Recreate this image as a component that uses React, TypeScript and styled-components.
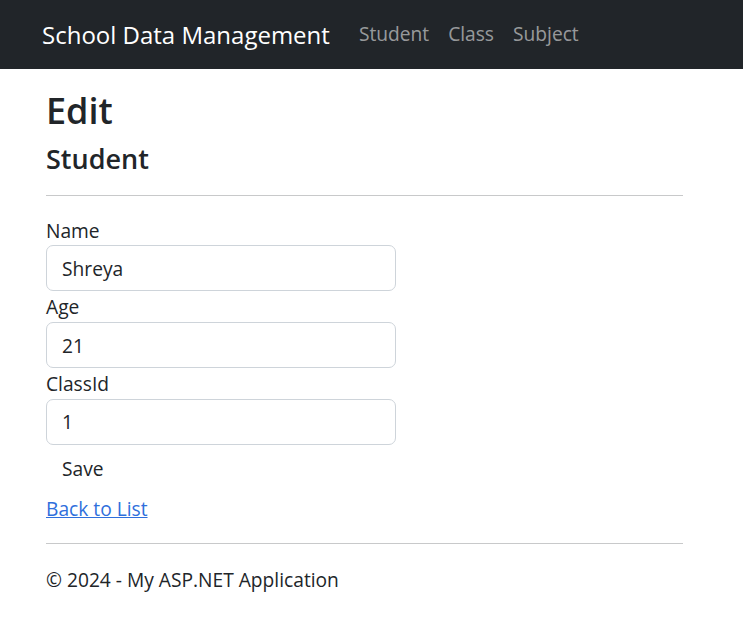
import React from "react";
import styled, { createGlobalStyle } from "styled-components";

const Global = createGlobalStyle`
  html { font-size: 19.2px; }
  body {
    margin: 0;
    font-family: "Open Sans", "Noto Sans", sans-serif;
    color: #212529;
    background: #fff;
    line-height: 1.5;
  }
  * { box-sizing: border-box; }
`;

const Navbar = styled.nav`
  height: 69px;
  background: #212529;
  display: flex;
  align-items: center;
  padding-left: 42px;
`;

const Brand = styled.a`
  color: #fff;
  font-size: 24px;
  text-decoration: none;
  margin-right: 20px;
`;

const NavList = styled.div`
  display: flex;
  align-items: center;
`;

const NavLink = styled.a`
  color: rgba(255, 255, 255, 0.55);
  font-size: 19.2px;
  padding: 0 9.5px;
  text-decoration: none;
  &:first-child { padding-left: 9px; }
`;

const Container = styled.div`
  width: 637px;
  margin-left: 46px;
`;

const Title = styled.h1`
  font-size: 36px;
  font-weight: 600;
  line-height: 1.2;
  margin: 20px 0 11px;
`;

const Subtitle = styled.h4`
  font-size: 27px;
  font-weight: 600;
  line-height: 1.2;
  margin: 0;
`;

const Rule = styled.hr<{ $after?: number }>`
  border: 0;
  border-top: 1px solid #c8c9ca;
  margin: 19px 0 ${(p) => p.$after ?? 21}px;
`;

const Form = styled.form`
  width: 350px;
  display: flex;
  flex-direction: column;
  gap: 2px;
`;

const Group = styled.div`
  display: flex;
  flex-direction: column;
`;

const Label = styled.label`
  font-size: 19.2px;
  line-height: 28.8px;
`;

const Input = styled.input`
  height: 46px;
  border: 1px solid #ced4da;
  border-radius: 7px;
  padding: 0 15px;
  font: inherit;
  font-size: 19.2px;
  color: #212529;
  outline: none;
`;

const SaveButton = styled.button`
  align-self: flex-start;
  background: transparent;
  border: 1px solid transparent;
  padding: 7px 15px;
  font: inherit;
  font-size: 19.2px;
  line-height: 28.8px;
  color: #212529;
`;

const LinkRow = styled.div`
  margin-top: 3px;
  line-height: 28.8px;
`;

const BackLink = styled.a`
  color: #2f6fdc;
  text-decoration: underline;
`;

const Footer = styled.footer`
  line-height: 28.8px;
`;

export default function App() {
  return (
    <>
      <Global />
      <Navbar>
        <Brand href="#">School Data Management</Brand>
        <NavList>
          <NavLink href="#">Student</NavLink>
          <NavLink href="#">Class</NavLink>
          <NavLink href="#">Subject</NavLink>
        </NavList>
      </Navbar>
      <Container>
        <Title>Edit</Title>
        <Subtitle>Student</Subtitle>
        <Rule />
        <Form onSubmit={(e) => e.preventDefault()}>
          <Group>
            <Label>Name</Label>
            <Input defaultValue="Shreya" />
          </Group>
          <Group>
            <Label>Age</Label>
            <Input defaultValue="21" />
          </Group>
          <Group>
            <Label>ClassId</Label>
            <Input defaultValue="1" />
          </Group>
          <SaveButton type="submit">Save</SaveButton>
        </Form>
        <LinkRow>
          <BackLink href="#">Back to List</BackLink>
        </LinkRow>
        <Rule $after={22} />
        <Footer>© 2024 - My ASP.NET Application</Footer>
      </Container>
    </>
  );
}
